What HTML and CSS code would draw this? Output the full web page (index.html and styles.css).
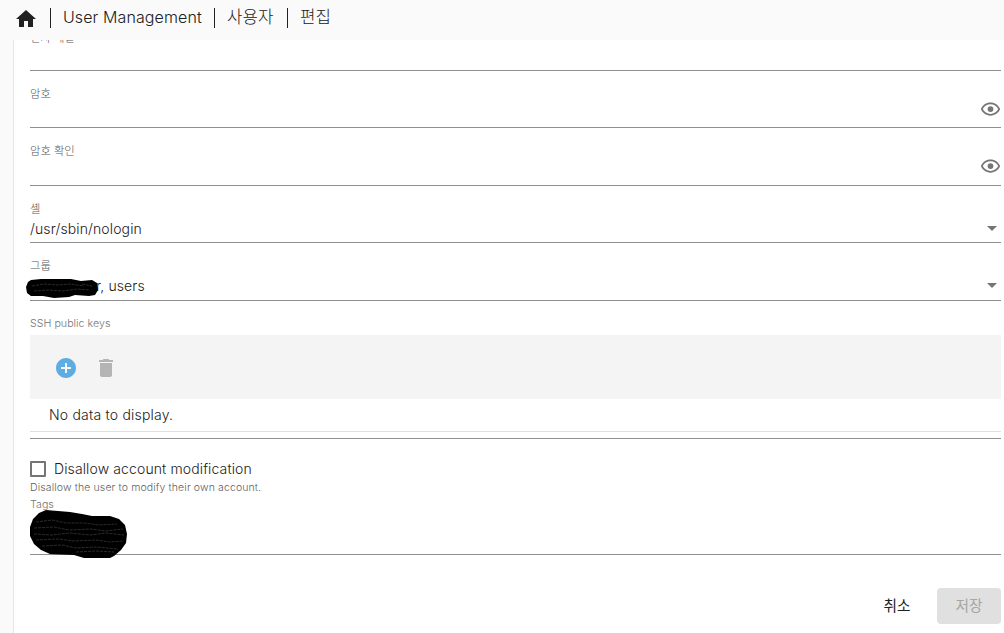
FILE: index.html
```html
<!DOCTYPE html>
<html lang="ko">

<head>
    <meta charset="UTF-8">
    <meta name="viewport" content="width=device-width, initial-scale=1.0">
    <title>User Management</title>
    <link rel="stylesheet" href="styles.css">
</head>

<body>
    <header class="breadcrumb">
        <svg class="home" viewBox="0 0 24 24"><path d="M10 20v-6h4v6h5v-8h3L12 3 2 12h3v8z"/></svg>
        <span class="crumb crumb-main">User Management</span>
        <span class="crumb crumb-user">사용자</span>
        <span class="crumb">편집</span>
    </header>
    <main class="card">
        <div class="field field-cut">
            <label class="label">전자 메일</label>
        </div>
        <div class="field">
            <label class="label">암호</label>
            <svg class="eye" viewBox="0 0 24 24"><path d="M12 6c3.79 0 7.17 2.13 8.82 5.5C19.17 14.87 15.79 17 12 17s-7.17-2.13-8.82-5.5C4.83 8.13 8.21 6 12 6m0-2C7 4 2.73 7.11 1 11.5 2.73 15.89 7 19 12 19s9.27-3.11 11-7.5C21.27 7.11 17 4 12 4zm0 4.200a3.300 3.300 0 1 0 0 6.600a3.300 3.300 0 1 0 0-6.600z"/></svg>
        </div>
        <div class="field field-tall">
            <label class="label">암호 확인</label>
            <svg class="eye" viewBox="0 0 24 24"><path d="M12 6c3.79 0 7.17 2.13 8.82 5.5C19.17 14.87 15.79 17 12 17s-7.17-2.13-8.82-5.5C4.83 8.13 8.21 6 12 6m0-2C7 4 2.73 7.11 1 11.5 2.73 15.89 7 19 12 19s9.27-3.11 11-7.5C21.27 7.11 17 4 12 4zm0 4.200a3.300 3.300 0 1 0 0 6.600a3.300 3.300 0 1 0 0-6.600z"/></svg>
        </div>
        <div class="field">
            <label class="label">셸</label>
            <div class="select"><span>/usr/sbin/nologin</span><i class="arrow"></i></div>
        </div>
        <div class="field field-tall">
            <label class="label">그룹</label>
            <div class="select"><span class="group">r, users</span><i class="arrow"></i></div>
            <svg class="scribble scribble-group" viewBox="0 0 74 20">
                <path d="M5 2L15 1L45 1L55 3L66 2L71 5L72 12L69 17L63 18L49 17L43 19L28 20L17 18L5 18L1 15L0 9L2 4Z"/>
                <path class="scratch" d="M6 8l12-2l14 1l12-1l14 2M8 13l14-1l15 1l14-2l12 1M56 6l10 2"/>
            </svg>
        </div>
        <div class="keys">
            <label class="label">SSH public keys</label>
            <div class="toolbar">
                <svg class="icon add" viewBox="0 0 24 24"><path d="M12 2C6.480 2 2 6.480 2 12s4.480 10 10 10 10-4.480 10-10S17.520 2 12 2zm5 11h-4v4h-2v-4H7v-2h4V7h2v4h4v2z"/></svg>
                <svg class="icon trash" viewBox="0 0 24 24"><path d="M6 19c0 1.100.9 2 2 2h8c1.100 0 2-.9 2-2V7H6v12zM19 4h-3.500l-1-1h-5l-1 1H5v2h14V4z"/></svg>
            </div>
            <div class="empty">No data to display.</div>
        </div>
        <div class="check">
            <span class="box"></span>
            <span class="check-text">Disallow account modification</span>
        </div>
        <div class="hint">Disallow the user to modify their own account.</div>
        <div class="tags">
            <label class="label">Tags</label>
            <svg class="scribble scribble-tags" viewBox="0 0 98 49">
                <path d="M9 3L16 0L28 1L40 2L52 4L62 6L80 6L89 9L95 15L97 24L96 33L91 40L84 46L80 48L54 48L44 45L20 44L11 40L4 34L0 26L0 17L3 9Z"/>
                <path class="scratch" d="M6 12l16-2l14 3l18 0l15 2l18-1M4 18l20-1l15 3l22-1l14 2l18-2M4 24l18 1l18-2l20 2l16-2l18 2M6 30l22-1l16 2l22-1l14 2l14-1M12 36l20-1l14 3l20-1l22 2M46 42l20-1l18 1"/>
            </svg>
        </div>
        <div class="actions">
            <button class="btn">취소</button>
            <button class="btn btn-save" disabled>저장</button>
        </div>
    </main>
</body>

</html>
```

FILE: styles.css
```css
* {
    box-sizing: border-box;
}

body {
    margin: 0;
    height: 633px;
    overflow: hidden;
    background-color: #fafafa;
    color: #212121;
    font-family: Inter, "Noto Sans CJK KR", sans-serif;
    font-size: 14px;
    font-weight: 300;
    letter-spacing: 0.12px;
}

.breadcrumb {
    display: flex;
    align-items: center;
    height: 40px;
    padding: 0 0 5px 14px;
    font-size: 16px;
}

.home {
    width: 24px;
    height: 24px;
    margin-top: 2px;
    fill: #212121;
}

.crumb {
    height: 20px;
    line-height: 19px;
    margin-left: 12px;
    padding-left: 12px;
    border-left: 1px solid #212121;
    font-size: 16.8px;
    letter-spacing: 0;
    white-space: nowrap;
}

.crumb-main {
    width: 152px;
    font-size: 16px;
    letter-spacing: 0.1px;
}

.crumb-user {
    width: 61px;
}

.card {
    height: 593px;
    margin-left: 13px;
    padding: 0 3px 0 16px;
    border-left: 1px solid #e6e6e6;
    background-color: #fff;
    overflow: hidden;
}

.field {
    position: relative;
    height: 57px;
    padding-top: 16px;
    border-bottom: 1px solid #8f8f8f;
}

.field-tall {
    height: 58px;
}

.field-cut {
    height: 31px;
    padding-top: 0;
    overflow: hidden;
}

.field-cut .label {
    margin-top: -9px;
}

.label {
    display: block;
    height: 14px;
    line-height: 14px;
    font-size: 11.3px;
    letter-spacing: 0;
    color: #555;
}

.eye {
    position: absolute;
    right: 0;
    bottom: 7px;
    width: 21px;
    height: 21px;
    fill: #757575;
}

.field-tall .eye {
    bottom: 8px;
}

.select {
    display: flex;
    align-items: center;
    justify-content: space-between;
    height: 24px;
    padding-right: 4px;
}

.arrow {
    border: 5px solid transparent;
    border-top-color: #757575;
    border-bottom: 0;
}

.group {
    padding-left: 66px;
}

.scribble {
    position: absolute;
    fill: #000;
}

.scratch {
    fill: none;
    stroke: #3d3d3d;
    stroke-width: 0.7;
    stroke-dasharray: 3 1;
}

.scribble-group {
    left: -4px;
    bottom: 2px;
    width: 74px;
    height: 20px;
}

.keys {
    height: 138px;
    padding-top: 16px;
    border-bottom: 1px solid #8f8f8f;
}

.keys .label,
.tags .label {
    font-size: 10.7px;
    color: #757575;
}

.keys .label {
    height: 18px;
}

.toolbar {
    display: flex;
    align-items: center;
    gap: 16px;
    height: 64px;
    padding: 2px 24px 0;
    background-color: #f4f4f4;
}

.icon {
    width: 24px;
    height: 24px;
}

.add {
    fill: #5dade2;
}

.trash {
    fill: #b4b4b4;
}

.empty {
    height: 33px;
    line-height: 32px;
    padding-left: 19px;
    border-bottom: 1px solid #e0e0e0;
    letter-spacing: 0.2px;
}

.check {
    display: flex;
    align-items: center;
    gap: 8px;
    height: 20px;
    margin-top: 20px;
}

.check-text {
    line-height: 16px;
    padding-bottom: 1px;
}

.box {
    width: 16px;
    height: 16px;
    border: 2px solid #757575;
    border-radius: 1px;
}

.hint {
    height: 18px;
    line-height: 17px;
    font-size: 10.5px;
    color: #5f5f5f;
}

.tags {
    position: relative;
    height: 58px;
    padding-top: 1px;
    border-bottom: 1px solid #8f8f8f;
}

.scribble-tags {
    left: 0;
    top: 13px;
    width: 98px;
    height: 49px;
}

.actions {
    display: flex;
    justify-content: flex-end;
    gap: 8px;
    margin-top: 33px;
}

.btn {
    width: 64px;
    height: 36px;
    padding: 0 0 3px;
    border: 0;
    border-radius: 4px;
    background-color: transparent;
    color: #212121;
    font-family: inherit;
    font-size: 14.7px;
}

.btn-save {
    background-color: #e0e0e0;
    color: #a6a6a6;
}
```
